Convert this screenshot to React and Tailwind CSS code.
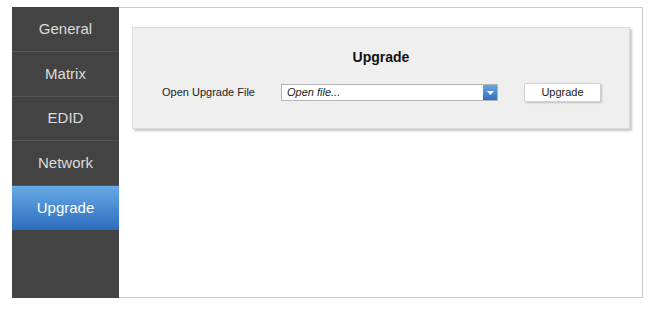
import { useState } from 'react';

const MENU = ['General', 'Matrix', 'EDID', 'Network', 'Upgrade'];
const HEIGHTS = ['h-[45px]', 'h-[45px]', 'h-[44px]', 'h-[45px]', 'h-[44px]'];

const SideItem = ({ label, active, height, onClick }) => (
  <button
    onClick={onClick}
    className={`${height} w-full flex items-center justify-center text-[15px] ${
      active
        ? 'bg-gradient-to-b from-[#67aae6] to-[#2b6dbd] text-white'
        : 'text-[#dcdcdc] border-b border-[#555555]'
    }`}
  >
    {label}
  </button>
);

const App = () => {
  const [active, setActive] = useState('Upgrade');

  return (
    <div className="w-[658px] h-[317px] bg-white pt-[7px] pl-[12px] font-['Liberation_Sans',Arial,sans-serif]">
      <div className="flex w-[631px] h-[291px]">
        <div className="w-[107px] bg-[#434343] flex flex-col">
          {MENU.map((m, i) => (
            <SideItem
              key={m}
              label={m}
              height={HEIGHTS[i]}
              active={active === m}
              onClick={() => setActive(m)}
            />
          ))}
        </div>

        <div className="flex-1 border-t border-r border-b border-[#cacaca] pt-[19px] pl-[13px] pr-[12px]">
          <div className="bg-[#efefef] border border-[#dcdcdc] shadow-[2px_2px_2px_rgba(0,0,0,0.22)] pt-[21px] pb-[26px]">
            <h2 className="text-center text-[14px] font-bold leading-[16px] text-[#111]">Upgrade</h2>
            <div className="flex items-center mt-[18px] pl-[29px]">
              <span className="w-[119px] text-[11px] text-[#222]">Open Upgrade File</span>
              <div className="flex w-[217px] h-[17px] bg-white border border-[#b5b5b5]">
                <span className="flex-1 pl-[5px] text-[11px] italic leading-[15px] text-[#222]">Open file...</span>
                <span className="w-[14px] h-full flex items-center justify-center bg-gradient-to-b from-[#6aa6e0] to-[#2f6fbf]">
                  <svg width="7" height="4" viewBox="0 0 7 4">
                    <path d="M0 0 L7 0 L3.5 4 Z" fill="#fff" />
                  </svg>
                </span>
              </div>
              <button className="ml-[26px] w-[77px] h-[19px] bg-white border border-[#d0d0d0] rounded-[2px] shadow-[1px_1px_2px_rgba(0,0,0,0.2)] text-[11px] text-[#222]">
                Upgrade
              </button>
            </div>
          </div>
        </div>
      </div>
    </div>
  );
};

export default App;
